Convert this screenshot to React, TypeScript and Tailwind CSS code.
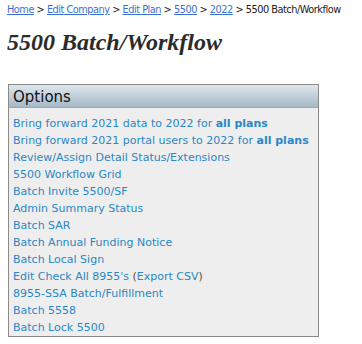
import React from "react";

const links: React.ReactNode[] = [
  <>Bring forward 2021 data to 2022 for <b>all plans</b></>,
  <>Bring forward 2021 portal users to 2022 for <b>all plans</b></>,
  <>Review/Assign Detail Status/Extensions</>,
  <>5500 Workflow Grid</>,
  <>Batch Invite 5500/SF</>,
  <>Admin Summary Status</>,
  <>Batch SAR</>,
  <>Batch Annual Funding Notice</>,
  <>Batch Local Sign</>,
  <>
    Edit Check All 8955's <span className="text-[#6b4a1a]">(</span>Export CSV<span className="text-[#6b4a1a]">)</span>
  </>,
  <>8955-SSA Batch/Fulfillment</>,
  <>Batch 5558</>,
  <>Batch Lock 5500</>,
];

export default function App() {
  return (
    <div className="w-[362px] h-[344px] bg-white overflow-hidden" style={{ fontFamily: '"DejaVu Sans", Verdana, sans-serif' }}>
      <div className="pt-[3px] pl-[7px] text-[9.8px] leading-[13px] tracking-[-0.5px] text-[#222] whitespace-nowrap">
        <a className="text-[#3b6fcf] underline">Home</a> &gt;{" "}
        <a className="text-[#3b6fcf] underline">Edit Company</a> &gt;{" "}
        <a className="text-[#3b6fcf] underline">Edit Plan</a> &gt;{" "}
        <a className="text-[#3b6fcf] underline">5500</a> &gt;{" "}
        <a className="text-[#3b6fcf] underline">2022</a> &gt; 5500 Batch/Workflow
      </div>
      <h1
        className="mt-[12px] ml-[7px] text-[24px] leading-[28px] font-bold italic text-[#2b2b2b]"
        style={{ fontFamily: '"Liberation Serif", "Times New Roman", serif' }}
      >
        5500 Batch/Workflow
      </h1>
      <div className="mt-[28px] ml-[8px] w-[311px] border border-[#8a8a8a] bg-[#eeeeee]">
        <div className="h-[23px] bg-gradient-to-b from-[#dfe7ee] to-[#a6b9c6] border-b border-[#9aa9b4] pl-[4px] pt-[1px] text-[15px] leading-[23px] text-[#111]">
          Options
        </div>
        <div className="pt-[7px] pb-0 pl-[4px] flex flex-col">
          {links.map((l, i) => (
            <a key={i} className="text-[11px] leading-[17px] text-[#2a87c6] whitespace-nowrap">
              {l}
            </a>
          ))}
        </div>
      </div>
    </div>
  );
}
